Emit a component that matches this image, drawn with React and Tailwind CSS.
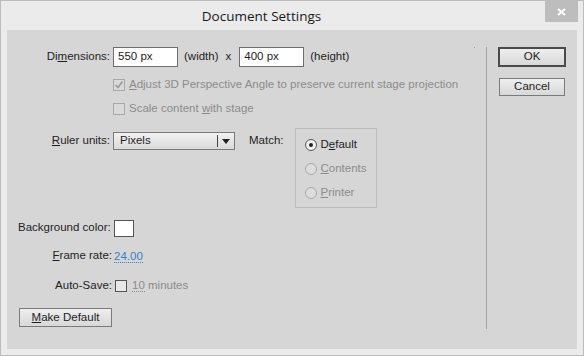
import React from 'react';

const font = { fontFamily: '"Liberation Sans", Arial, sans-serif' };

const CheckBox = ({ checked, disabled }) => (
  <span className={`inline-flex w-[12px] h-[12px] border items-center justify-center ${disabled ? 'border-[#a8a8a8] bg-[#d9d9d9]' : 'border-[#555] bg-[#e8e8e8]'}`}>
    {checked && (
      <svg width="10" height="10" viewBox="0 0 10 10">
        <path d="M1.5 5 L4 7.5 L8.5 1.5" stroke="#9a9a9a" strokeWidth="1.6" fill="none" />
      </svg>
    )}
  </span>
);

const Radio = ({ checked, label, disabled, u }) => (
  <div className="flex items-center h-[24px]">
    <span className={`w-[12px] h-[12px] rounded-full border flex items-center justify-center ${checked ? 'border-[#555] bg-[#f2f2f2]' : 'border-[#a8a8a8] bg-[#dcdcdc]'}`}>
      {checked && <span className="w-[4px] h-[4px] rounded-full bg-[#222]" />}
    </span>
    <span className={`ml-[4px] ${disabled ? 'text-[#8c8c8c]' : 'text-[#1e1e1e]'}`}>
      {label.slice(0, u)}<span className="underline">{label[u]}</span>{label.slice(u + 1)}
    </span>
  </div>
);

const Button = ({ children, primary, className = '' }) => (
  <div className={`flex items-center justify-center bg-gradient-to-b from-[#eeeeee] to-[#d8d8d8] text-[#1e1e1e] ${primary ? 'border-2 border-[#4a4a4a]' : 'border border-[#7a7a7a]'} ${className}`}>
    {children}
  </div>
);

export default function App() {
  return (
    <div className="w-[584px] h-[356px] bg-[#ebebeb] border border-[#bcbcbc] flex flex-col text-[11.5px]" style={font}>
      {/* title bar */}
      <div className="h-[29px] flex items-start relative">
        <div className="flex-1 text-center pt-[5px] pr-[61px] text-[13.5px] text-[#1a1a1a]" style={{ fontFamily: '"Open Sans", "Noto Sans", sans-serif' }}>
          Document Settings
        </div>
        <div className="absolute right-[5px] top-0 w-[33px] h-[21px] bg-[#bdbdbd] flex items-center justify-center">
          <svg width="9" height="8" viewBox="0 0 9 8">
            <path d="M1 1 L8 7 M8 1 L1 7" stroke="#fff" strokeWidth="2" />
          </svg>
        </div>
      </div>

      {/* panel */}
      <div className="mx-[6px] mb-[6px] flex-1 bg-[#d6d6d6] flex relative">
        <div className="absolute left-[467px] top-[17px] w-[1px] h-[1px] bg-[#9a9a9a]" />
        <div className="w-[479px] flex flex-col text-[#1e1e1e]">
          {/* dimensions */}
          <div className="flex items-center mt-[17px] h-[20px]">
            <span className="w-[106px] text-right pr-[3px]">
              Di<span className="underline">m</span>ensions:
            </span>
            <div className="w-[65px] h-[20px] bg-white border border-[#6e6e6e] flex items-center pl-[4px]">550 px</div>
            <span className="ml-[6px]">(width)</span>
            <span className="ml-[7px]">x</span>
            <div className="ml-[8px] w-[65px] h-[20px] bg-white border border-[#6e6e6e] flex items-center pl-[4px]">400 px</div>
            <span className="ml-[6px]">(height)</span>
          </div>

          <div className="flex items-center mt-[12px] ml-[106px] h-[12px] text-[#8c8c8c]">
            <CheckBox checked disabled />
            <span className="ml-[4px]">
              <span className="underline">A</span>djust 3D Perspective Angle to preserve current stage projection
            </span>
          </div>
          <div className="flex items-center mt-[12px] ml-[106px] h-[12px] text-[#8c8c8c]">
            <CheckBox disabled />
            <span className="ml-[4px]">
              Scale content <span className="underline">w</span>ith stage
            </span>
          </div>

          {/* ruler units + match */}
          <div className="flex items-start mt-[13px]">
            <div className="flex items-center h-[18px] mt-[4px]">
              <span className="w-[106px] text-right pr-[3px]">
                <span className="underline">R</span>uler units:
              </span>
              <div className="w-[122px] h-[18px] border border-[#7a7a7a] bg-gradient-to-b from-[#f2f2f2] to-[#dadada] flex items-center">
                <span className="flex-1 pl-[6px]">Pixels</span>
                <span className="w-[1px] h-[12px] bg-[#444]" />
                <span className="w-[16px] flex justify-center">
                  <svg width="8" height="5" viewBox="0 0 8 5"><path d="M0 0 H8 L4 5 Z" fill="#222" /></svg>
                </span>
              </div>
              <span className="ml-[14px]">Match:</span>
            </div>
            <div className="ml-[11px] w-[82px] h-[80px] border border-[#bcbcbc] flex flex-col pl-[9px] pt-[4px]">
              <Radio checked label="Default" u={1} />
              <Radio label="Contents" u={0} disabled />
              <Radio label="Printer" u={0} disabled />
            </div>
          </div>

          {/* background colour */}
          <div className="flex items-center mt-[12px] h-[16px]">
            <span className="ml-[11px]">Background color:</span>
            <div className="ml-[3px] w-[20px] h-[17px] bg-white border border-[#555]" />
          </div>

          <div className="flex items-center mt-[13px] h-[14px]">
            <span className="w-[107px] text-right pr-[2px]">
              <span className="underline">F</span>rame rate:
            </span>
            <span className="text-[#3a7fc6] border-b border-dotted border-[#3a7fc6] leading-[12px]">24.00</span>
          </div>

          <div className="flex items-center mt-[17px] h-[12px]">
            <span className="w-[108px] text-right pr-[3px]">Auto-Save:</span>
            <CheckBox />
            <span className="ml-[5px] text-[#8c8c8c]">
              <span className="border-b border-dotted border-[#8c8c8c]">10</span> minutes
            </span>
          </div>

          <Button className="mt-[16px] ml-[12px] w-[93px] h-[19px]">
            <span><span className="underline">M</span>ake Default</span>
          </Button>
        </div>

        {/* separator */}
        <div className="w-[1px] bg-[#a4a4a4] mt-[17px] mb-[20px]" />

        <div className="flex flex-col ml-[11px] mt-[17px]">
          <Button primary className="w-[68px] h-[20px]">OK</Button>
          <Button className="mt-[11px] ml-[1px] w-[66px] h-[18px]">Cancel</Button>
        </div>
      </div>
    </div>
  );
}
